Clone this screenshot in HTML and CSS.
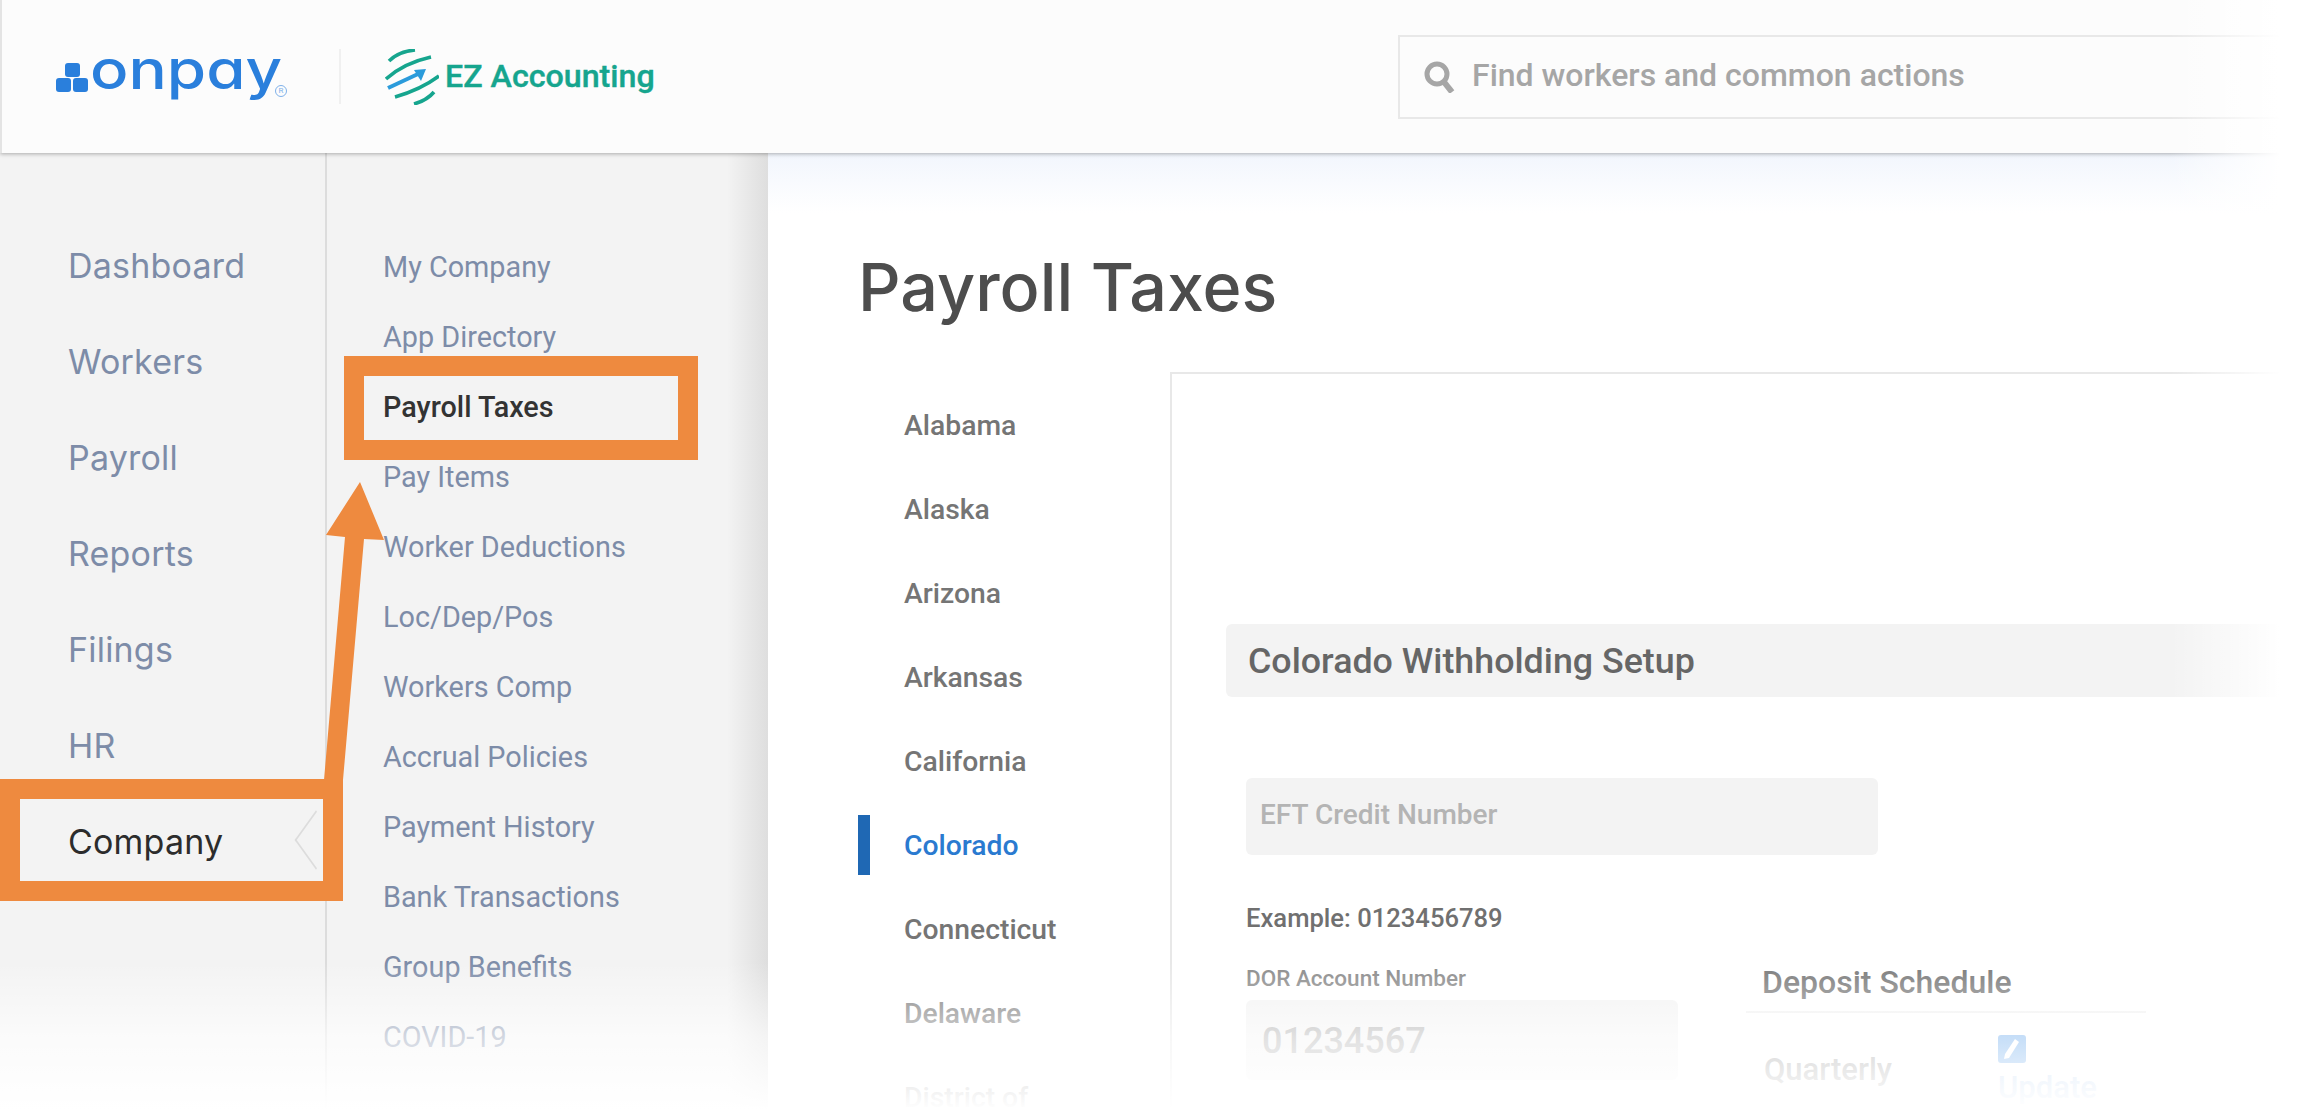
FILE: index.html
```html
<!DOCTYPE html>
<html>
  <head>
    <title>Payroll Taxes</title>
    <link rel="stylesheet" href="styles.css">
  </head>
  <body>
    <div id="page">
      <header id="topbar">
        <div class="logo-onpay">
          <div class="logo-blocks"><i></i><span><i></i><i></i></span></div>
          <span class="logo-word">onpay</span>
          <span class="logo-reg">R</span>
        </div>
        <div class="logo-divider"></div>
        <div class="logo-ez">
          <svg width="54" height="56" viewBox="0 0 54 56" fill="none">
            <g stroke="#16a58e" stroke-width="3.6">
              <path d="M4 12C10 6 19 2 30 1"/>
              <path d="M1 30C12 20 28 12 46 8"/>
              <path d="M10 48C24 44 42 36 54 27"/>
              <path d="M29 55C36 53 44 49 49 43"/>
            </g>
            <path d="M3 39L33 25" stroke="#2b9bdb" stroke-width="4"/>
            <path d="M41 20L29 21L36 32Z" fill="#2b9bdb"/>
          </svg>
          <span class="logo-ez-word">EZ Accounting</span>
        </div>
        <div class="search">
          <svg width="32" height="32" viewBox="0 0 32 32" fill="none" stroke="#a6a6a6">
            <circle cx="13" cy="13" r="10" stroke-width="5"/>
            <path d="M20 21L28 31" stroke-width="6"/>
          </svg>
          <span>Find workers and common actions</span>
        </div>
      </header>

      <div id="content">
        <nav class="nav-primary">
          <a>Dashboard</a>
          <a>Workers</a>
          <a>Payroll</a>
          <a>Reports</a>
          <a>Filings</a>
          <a>HR</a>
          <a class="active">Company</a>
        </nav>
        <nav class="nav-secondary">
          <a>My Company</a>
          <a>App Directory</a>
          <a class="active">Payroll Taxes</a>
          <a>Pay Items</a>
          <a>Worker Deductions</a>
          <a>Loc/Dep/Pos</a>
          <a>Workers Comp</a>
          <a>Accrual Policies</a>
          <a>Payment History</a>
          <a>Bank Transactions</a>
          <a>Group Benefits</a>
          <a>COVID-19</a>
        </nav>
        <main id="main">
          <h1>Payroll Taxes</h1>
          <div class="tax-body">
            <ul class="states">
              <li>Alabama</li>
              <li>Alaska</li>
              <li>Arizona</li>
              <li>Arkansas</li>
              <li>California</li>
              <li class="active">Colorado</li>
              <li>Connecticut</li>
              <li>Delaware</li>
              <li>District of</li>
            </ul>
            <section class="panel">
              <h2>Colorado Withholding Setup</h2>
              <div class="eft-field">EFT Credit Number</div>
              <p class="example">Example: 0123456789</p>
              <div class="panel-cols">
                <div class="dor">
                  <label>DOR Account Number</label>
                  <div class="dor-field">01234567</div>
                </div>
                <div class="deposit">
                  <h3>Deposit Schedule</h3>
                  <div class="deposit-row">
                    <span class="deposit-value">Quarterly</span>
                    <div class="deposit-update">
                      <span class="edit-btn">
                        <svg width="16" height="22" viewBox="0 0 16 22" fill="#fff"><path d="M11 1L15 4L5 20L0 21L1 16Z"/></svg>
                      </span>
                      <span class="update-text">Update</span>
                    </div>
                  </div>
                </div>
              </div>
            </section>
          </div>
        </main>
      </div>

      <!-- orange callouts from the help article -->
      <div class="callout callout-company"></div>
      <div class="callout callout-taxes"></div>
      <svg class="callout-arrow" width="70" height="310" viewBox="0 0 70 310">
        <path d="M34 2L58 60L38 59L17 300L-2 300L19 57L0 55Z" fill="#ee8a3f"/>
      </svg>

      <div class="fade-bottom"></div>
      <div class="fade-right"></div>
    </div>
  </body>
</html>
```

FILE: styles.css
```css
* {
  box-sizing: border-box;
}

body {
  margin: 0;
  background: #fff;
  font-family: 'Roboto', 'Liberation Sans', sans-serif;
}

#page {
  position: relative;
  width: 2320px;
  height: 1120px;
  overflow: hidden;
}

/* Top bar */
#topbar {
  position: relative;
  z-index: 2;
  display: flex;
  align-items: center;
  height: 153px;
  padding-left: 54px;
  background: #fcfcfc;
  border-left: 2px solid #e4e4e4;
  box-shadow: 0 1px 4px rgba(0, 0, 0, 0.3);
}

.logo-onpay {
  display: flex;
  align-items: center;
  width: 283px;
  height: 60px;
}

.logo-blocks {
  display: flex;
  flex-direction: column;
  align-items: center;
  gap: 1px;
  width: 32px;
  margin-top: 1px;
}

.logo-blocks i {
  display: block;
  width: 15px;
  height: 14px;
  background: #2a7fdc;
  border-radius: 3px;
}

.logo-blocks span {
  display: flex;
  gap: 2px;
}

.logo-word {
  width: 156px;
  height: 60px;
  margin: -14px 0 0 2px;
  font-family: 'Inter', sans-serif;
  font-feature-settings: 'cv11';
  font-size: 54px;
  font-weight: 500;
  line-height: 60px;
  white-space: nowrap;
  color: #2a7fdc;
  transform: scaleX(1.18);
  transform-origin: left center;
}

.logo-reg {
  display: flex;
  align-items: center;
  justify-content: center;
  flex: none;
  width: 12px;
  height: 12px;
  margin: 28px 0 0 29px;
  border: 1px solid #7fb1ea;
  border-radius: 50%;
  font-size: 8px;
  color: #7fb1ea;
}

.logo-divider {
  width: 2px;
  height: 55px;
  margin-right: 44px;
  background: #f0f0f0;
}

.logo-ez {
  display: flex;
  align-items: center;
  gap: 6px;
  width: 1013px;
}

.logo-ez-word {
  padding-bottom: 2px;
  font-size: 32.2px;
  font-weight: 500;
  color: #16a58e;
  -webkit-text-stroke: 0.4px #16a58e;
}

.search {
  flex: 1;
  display: flex;
  align-items: center;
  gap: 16px;
  height: 84px;
  padding-left: 24px;
  border: 2px solid #e8e8e8;
  font-size: 32px;
  font-weight: 500;
  color: #a6a6a6;
}

.search span {
  padding-bottom: 4px;
}

/* Columns below the bar */
#content {
  display: flex;
  height: 967px;
}

.nav-primary {
  display: flex;
  flex-direction: column;
  flex: none;
  width: 327px;
  padding-top: 65px;
  background: #f3f3f3;
  border-right: 2px solid #dcdcdc;
}

.nav-primary a {
  position: relative;
  display: flex;
  align-items: center;
  flex: none;
  height: 96px;
  padding: 0 0 2px 68px;
  font-family: 'Inter', sans-serif;
  font-size: 34px;
  letter-spacing: 0.2px;
  color: #7d8ca8;
}

.nav-primary a.active {
  color: #2c2c2c;
}

.nav-primary a.active::after {
  content: "";
  position: absolute;
  top: 25px;
  right: -12px;
  width: 40px;
  height: 40px;
  background: #f3f3f3;
  border-left: 2px solid #dcdcdc;
  border-bottom: 2px solid #dcdcdc;
  transform: scaleX(0.72) rotate(45deg);
}

.nav-secondary {
  display: flex;
  flex-direction: column;
  flex: none;
  width: 441px;
  padding: 79px 0 0 56px;
  background: linear-gradient(to right, #f3f3f3 0, #f3f3f3 400px, #dedede 441px);
}

.nav-secondary a {
  display: flex;
  align-items: center;
  flex: none;
  height: 70px;
  font-size: 28.8px;
  color: #7d8ca8;
}

.nav-secondary a.active {
  font-weight: 500;
  color: #333;
}

/* Main area */
#main {
  flex: 1;
  padding-left: 90px;
  background: linear-gradient(to bottom, #f2f6fd 0, #fff 60px);
}

h1 {
  margin: 0;
  padding-top: 100px;
  height: 219px;
  font-family: 'Inter', sans-serif;
  font-size: 66.4px;
  font-weight: 500;
  line-height: 68px;
  color: #4d4d4d;
}

.tax-body {
  display: flex;
}

.states {
  flex: none;
  width: 312px;
  margin: 0;
  padding: 11px 0 0;
  list-style: none;
}

.states li {
  display: flex;
  align-items: center;
  height: 84px;
  padding-left: 46px;
  font-size: 28.3px;
  font-weight: 500;
  color: #757575;
}

.states li.active {
  color: #2a7ad0;
  background: linear-gradient(#1f68b4, #1f68b4) left center / 12px 60px no-repeat;
}

.panel {
  flex: 1;
  height: 800px;
  padding: 250px 0 0 54px;
  border-top: 2px solid #e8e8e8;
  border-left: 2px solid #e8e8e8;
}

.panel h2 {
  display: flex;
  align-items: center;
  height: 73px;
  margin: 0;
  padding-left: 22px;
  background: #f3f3f3;
  border-radius: 6px;
  font-size: 35.8px;
  font-weight: 500;
  color: #666;
}

.eft-field {
  display: flex;
  align-items: center;
  width: 632px;
  height: 77px;
  margin: 81px 0 0 20px;
  padding: 0 0 4px 14px;
  background: #f3f3f3;
  border-radius: 6px;
  font-size: 28px;
  font-weight: 500;
  color: #b4b4b4;
}

.example {
  margin: 48px 0 0 20px;
  font-size: 25.6px;
  font-weight: 500;
  line-height: 30px;
  color: #707070;
}

.panel-cols {
  display: flex;
  margin: 32px 0 0 20px;
}

.dor {
  flex: none;
  width: 500px;
}

.dor label {
  display: block;
  font-size: 22.5px;
  font-weight: 500;
  line-height: 26px;
  color: #8a8a8a;
}

.dor-field {
  display: flex;
  align-items: center;
  width: 432px;
  height: 80px;
  margin-top: 9px;
  padding: 2px 0 0 16px;
  background: #f3f3f3;
  border-radius: 6px;
  font-size: 36px;
  font-weight: 500;
  color: #a8a8a8;
}

.deposit {
  width: 400px;
}

.deposit h3 {
  height: 49px;
  margin: -1px 0 0;
  padding: 0 0 0 16px;
  border-bottom: 2px solid #f0f0f0;
  font-size: 32px;
  font-weight: 500;
  line-height: 36px;
  color: #7a7a7a;
}

.deposit-row {
  display: flex;
  margin-top: 22px;
  padding-left: 18px;
}

.deposit-value {
  width: 234px;
  margin-top: 17px;
  font-size: 31px;
  font-weight: 500;
  line-height: 36px;
  color: #8a8a8a;
}

.deposit-update {
  display: flex;
  flex-direction: column;
  align-items: flex-start;
}

.edit-btn {
  display: flex;
  align-items: center;
  justify-content: center;
  width: 28px;
  height: 28px;
  background: #5aa0ea;
  border-radius: 3px;
}

.update-text {
  margin-top: 7px;
  font-size: 31px;
  font-weight: 500;
  line-height: 36px;
  color: #a8c8ee;
}

/* Callouts sit over the page */
.callout {
  position: absolute;
  z-index: 4;
  border: 20px solid #ee8a3f;
}

.callout-company {
  top: 779px;
  left: 0;
  width: 343px;
  height: 122px;
}

.callout-taxes {
  top: 356px;
  left: 344px;
  width: 354px;
  height: 104px;
}

.callout-arrow {
  position: absolute;
  z-index: 4;
  top: 480px;
  left: 326px;
  overflow: visible;
}

.fade-bottom {
  position: absolute;
  z-index: 5;
  left: 0;
  right: 0;
  top: 962px;
  height: 148px;
  background: linear-gradient(to bottom, rgba(255, 255, 255, 0), rgba(255, 255, 255, 0.65) 50%, #fff);
}

.fade-bottom::after {
  content: "";
  position: absolute;
  top: 148px;
  left: 0;
  right: 0;
  height: 30px;
  background: #fff;
}

.fade-right {
  position: absolute;
  z-index: 5;
  top: 0;
  bottom: 0;
  left: 2170px;
  width: 150px;
  background: linear-gradient(to right, rgba(255, 255, 255, 0), #fff 110px);
}
```
